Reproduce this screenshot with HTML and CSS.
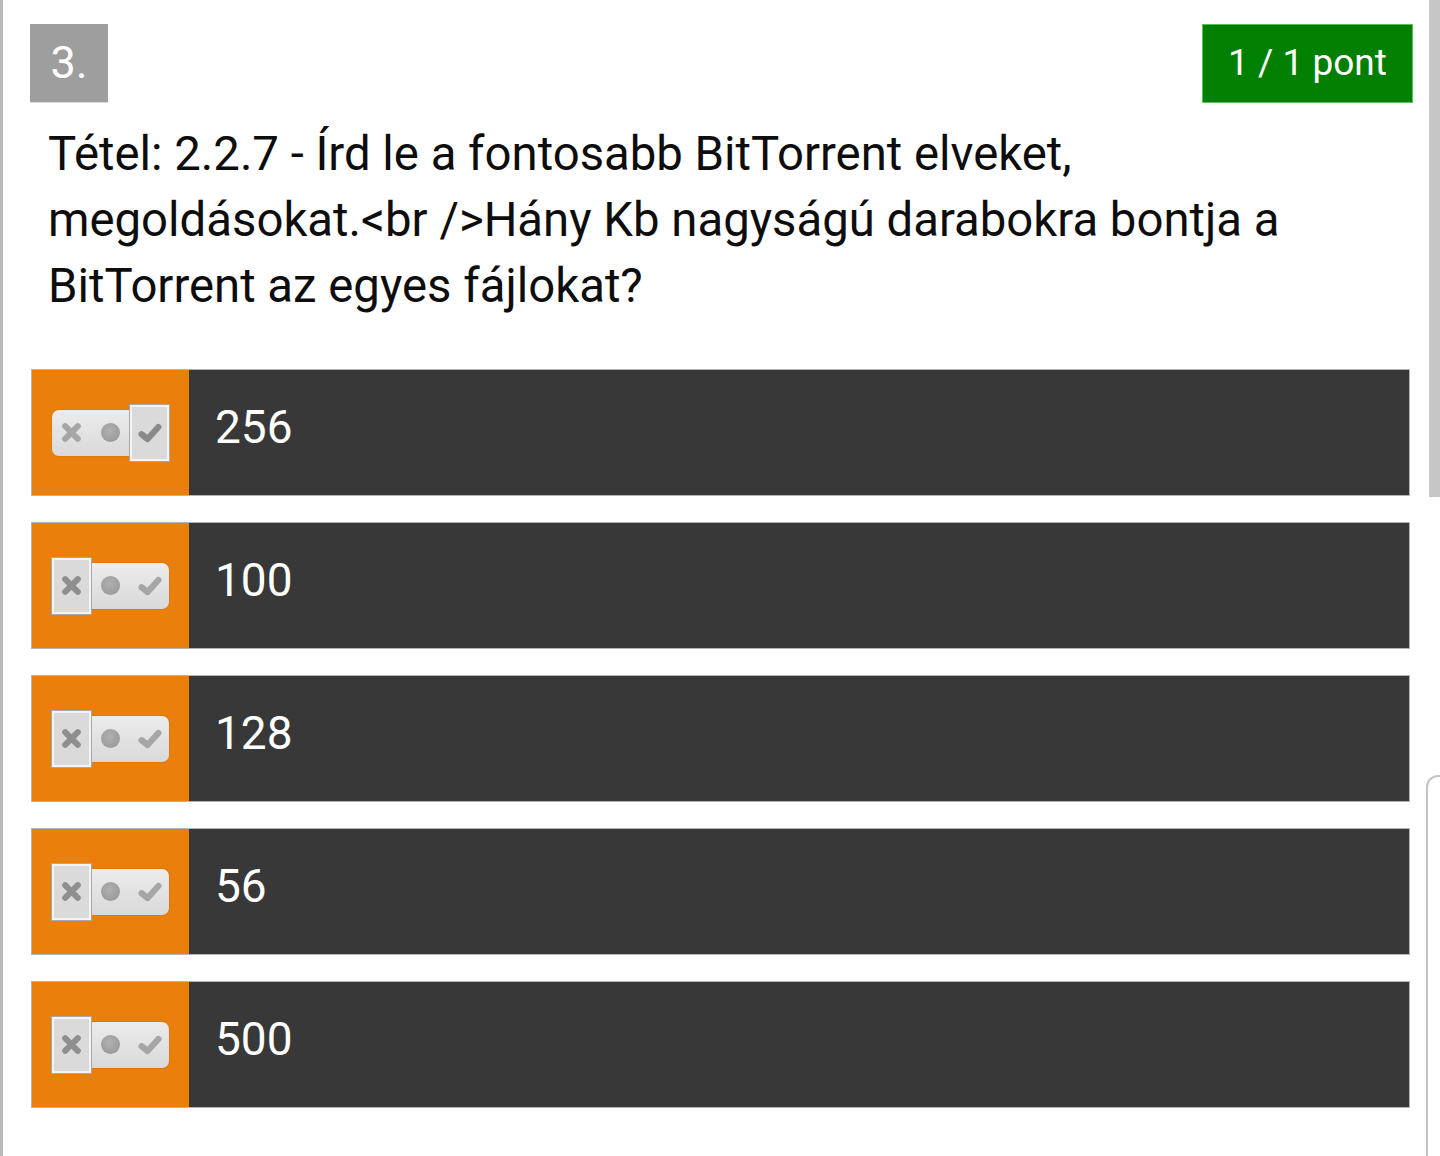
FILE: index.html
```html
<!DOCTYPE html>
<html lang="hu">
<head>
<meta charset="utf-8">
<title>3. kérdés</title>
<link rel="stylesheet" href="styles.css">
</head>
<body>
<div class="page">
  <div class="edge-left"></div>
  <main class="content">
    <header class="head">
      <span class="num">3.</span>
      <span class="score">1 / 1 pont</span>
    </header>
    <p class="title">Tétel: 2.2.7 - Írd le a fontosabb BitTorrent elveket, megoldásokat.&#8288;&lt;&#8288;br /&gt;Hány Kb nagyságú darabokra bontja a BitTorrent az egyes fájlokat?</p>
    <ul class="answers">
      <li class="answer">
        <div class="mark">
          <div class="toggle sel-yes">
            <span class="cell c-no"><svg viewBox="0 0 20 20"><path d="M4 4 L16 16 M16 4 L4 16"/></svg></span>
            <span class="cell c-mid"><i class="dot"></i></span>
            <span class="cell c-yes"><svg viewBox="0 0 20 20"><path d="M3 11 L8 15 L17 5"/></svg></span>
          </div>
        </div>
        <div class="text">256</div>
      </li>
      <li class="answer">
        <div class="mark">
          <div class="toggle sel-no">
            <span class="cell c-no"><svg viewBox="0 0 20 20"><path d="M4 4 L16 16 M16 4 L4 16"/></svg></span>
            <span class="cell c-mid"><i class="dot"></i></span>
            <span class="cell c-yes"><svg viewBox="0 0 20 20"><path d="M3 11 L8 15 L17 5"/></svg></span>
          </div>
        </div>
        <div class="text">100</div>
      </li>
      <li class="answer">
        <div class="mark">
          <div class="toggle sel-no">
            <span class="cell c-no"><svg viewBox="0 0 20 20"><path d="M4 4 L16 16 M16 4 L4 16"/></svg></span>
            <span class="cell c-mid"><i class="dot"></i></span>
            <span class="cell c-yes"><svg viewBox="0 0 20 20"><path d="M3 11 L8 15 L17 5"/></svg></span>
          </div>
        </div>
        <div class="text">128</div>
      </li>
      <li class="answer">
        <div class="mark">
          <div class="toggle sel-no">
            <span class="cell c-no"><svg viewBox="0 0 20 20"><path d="M4 4 L16 16 M16 4 L4 16"/></svg></span>
            <span class="cell c-mid"><i class="dot"></i></span>
            <span class="cell c-yes"><svg viewBox="0 0 20 20"><path d="M3 11 L8 15 L17 5"/></svg></span>
          </div>
        </div>
        <div class="text">56</div>
      </li>
      <li class="answer">
        <div class="mark">
          <div class="toggle sel-no">
            <span class="cell c-no"><svg viewBox="0 0 20 20"><path d="M4 4 L16 16 M16 4 L4 16"/></svg></span>
            <span class="cell c-mid"><i class="dot"></i></span>
            <span class="cell c-yes"><svg viewBox="0 0 20 20"><path d="M3 11 L8 15 L17 5"/></svg></span>
          </div>
        </div>
        <div class="text">500</div>
      </li>
    </ul>
  </main>
  <aside class="scroll">
    <div class="thumb"></div>
    <div class="track"></div>
  </aside>
</div>
</body>
</html>
```

FILE: styles.css
```css
html, body {
  margin: 0;
  padding: 0;
  background: #ffffff;
}
body {
  font-family: Roboto, "Liberation Sans", Arial, sans-serif;
  color: #111111;
}
.page {
  display: flex;
  width: 1440px;
  height: 1156px;
  overflow: hidden;
}
.edge-left {
  width: 3px;
  flex: none;
  background: #b9b9b9;
}
.content {
  flex: 1;
  min-width: 0;
}
.head {
  display: flex;
  justify-content: space-between;
  padding: 24px 15px 0 27px;
}
.num {
  width: 78px;
  height: 79px;
  background: #9e9e9e;
  color: #ffffff;
  font-size: 45px;
  display: flex;
  align-items: center;
  justify-content: center;
  box-sizing: border-box;
  padding-bottom: 2px;
  border-bottom: 1px solid #d9d9d9;
}
.score {
  width: 211px;
  height: 79px;
  background: #007f00;
  color: #ffffff;
  font-size: 37px;
  display: flex;
  align-items: center;
  justify-content: center;
  box-sizing: border-box;
  border: 1px solid #5cbf5c;
  padding-bottom: 2px;
}
.title {
  margin: 18px 25px 0 45px;
  font-size: 47.3px;
  line-height: 66px;
  color: #0d0d0d;
}
.answers {
  list-style: none;
  margin: 50px 0 0 28px;
  padding: 0;
  width: 1379px;
  display: flex;
  flex-direction: column;
  gap: 27px;
}
.answer {
  display: flex;
  height: 127px;
  box-sizing: border-box;
  border: 1px solid #b4b4b4;
  background: #383838;
}
.answer + .answer {
  margin-top: -1px;
}
.mark {
  width: 157px;
  flex: none;
  background: #ea800b;
  display: flex;
  align-items: center;
  padding-left: 20px;
  box-sizing: border-box;
}
.toggle {
  display: flex;
  width: 117px;
  height: 46px;
  border-radius: 7px;
  background: linear-gradient(#ececec, #d9d9d9);
  box-shadow: 0 0 2px rgba(120, 60, 0, 0.35);
  filter: blur(0.6px);
}
.cell {
  width: 39px;
  flex: none;
  box-sizing: border-box;
  display: flex;
  align-items: center;
  justify-content: center;
}
.cell svg {
  width: 24px;
  height: 24px;
  fill: none;
  stroke: #a6a6a6;
  stroke-width: 5.2;
  stroke-linecap: round;
  stroke-linejoin: round;
}
.c-no svg {
  width: 21px;
  height: 21px;
  stroke-width: 5.8;
}
.dot {
  display: block;
  width: 19px;
  height: 19px;
  border-radius: 50%;
  background: radial-gradient(circle at 45% 40%, #b0b0b0, #949494);
}
.sel-yes .c-yes,
.sel-no .c-no {
  margin: -5px 0;
  border: 2px solid #f4f4f4;
  outline: 1px solid #a8a8a8;
  background: #dadada;
}
.sel-no .c-no svg {
  stroke: #8f8f8f;
}
.sel-yes .c-yes svg {
  stroke: #8a8a8a;
}
.text {
  flex: 1;
  display: flex;
  align-items: center;
  padding: 0 0 11px 26px;
  color: #ffffff;
  font-size: 46px;
}
.scroll {
  width: 12px;
  flex: none;
  display: flex;
  flex-direction: column;
}
.thumb {
  height: 497px;
  background: #c6c6c6;
  margin-left: 1px;
}
.track {
  margin-top: 278px;
  flex: 1;
  margin-left: -2px;
  border-left: 2px solid #c4c4c4;
  border-top: 2px solid #c4c4c4;
  border-top-left-radius: 12px;
}
```
